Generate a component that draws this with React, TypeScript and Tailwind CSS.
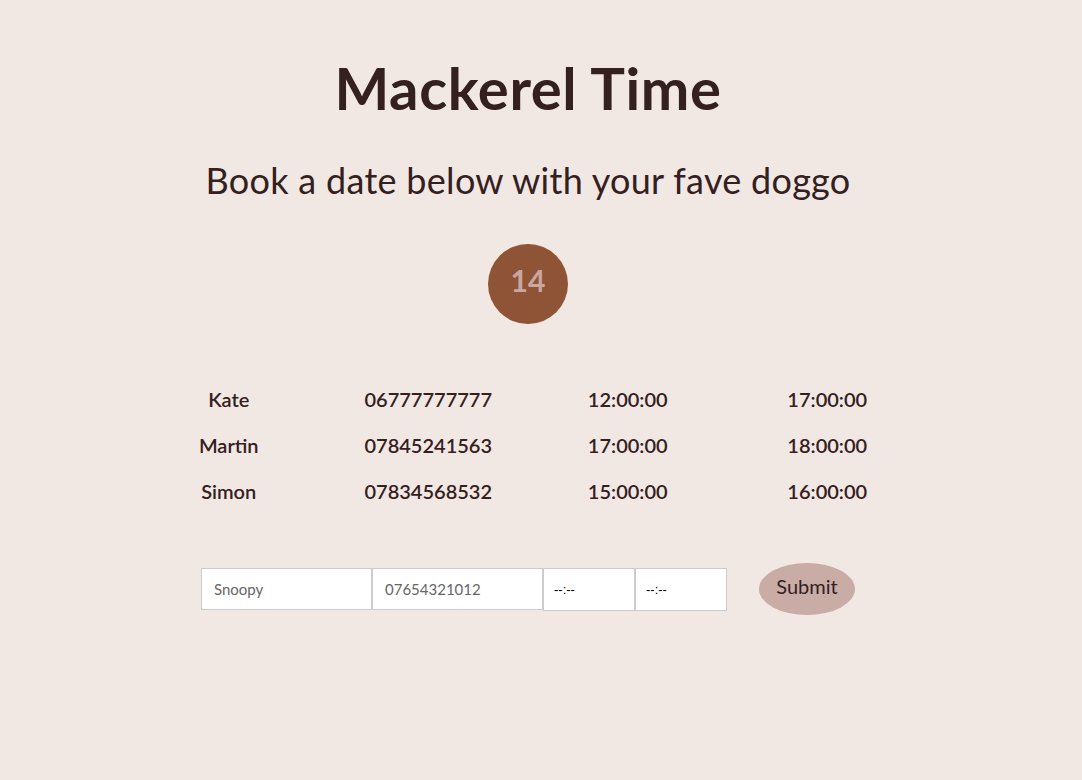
import React from "react";

const rows = [
  ["Kate", "06777777777", "12:00:00", "17:00:00"],
  ["Martin", "07845241563", "17:00:00", "18:00:00"],
  ["Simon", "07834568532", "15:00:00", "16:00:00"],
];

export default function App() {
  return (
    <div
      className="min-h-[780px] w-full bg-[#f2e8e3] text-[#33201f] flex flex-col items-center pr-[26px]"
      style={{ fontFamily: "Lato, 'Noto Sans', sans-serif" }}
    >
      <h1 className="mt-[52px] text-[58px] leading-[72px] font-bold tracking-[0.6px]">Mackerel Time</h1>
      <h2 className="mt-[34px] text-[36px] leading-[44px] font-normal tracking-[0.3px]">
        Book a date below with your fave doggo
      </h2>
      <div className="mt-[42px] w-[80px] h-[80px] rounded-full bg-[#8f5436] flex items-center justify-center pb-[8px]">
        <span className="text-[30px] font-bold text-[#c9a6a0] leading-none">14</span>
      </div>
      <div className="mt-[52px] w-[798px] grid grid-cols-4">
        {rows.map((r) =>
          r.map((c, i) => (
            <div key={r[0] + i} className="h-[46px] flex items-center justify-center text-[20px] font-semibold">
              {c}
            </div>
          ))
        )}
      </div>
      <form className="mt-[49px] flex items-center" onSubmit={(e) => e.preventDefault()}>
        <input
          className="w-[171px] h-[42px] bg-white border border-[#cccccc] px-[12px] text-[15px] text-[#333] placeholder:text-[#666666] outline-none"
          placeholder="Snoopy"
        />
        <input
          className="w-[171px] h-[42px] bg-white border border-[#cccccc] px-[12px] text-[15px] text-[#333] placeholder:text-[#666666] outline-none"
          placeholder="07654321012"
        />
        <input
          className="w-[92px] h-[43px] bg-white border border-[#cccccc] px-[10px] text-[13px] text-black placeholder:text-black outline-none"
          style={{ fontFamily: "'Liberation Sans', sans-serif" }}
          placeholder="--:--"
        />
        <input
          className="w-[92px] h-[43px] bg-white border border-[#cccccc] px-[10px] text-[13px] text-black placeholder:text-black outline-none"
          style={{ fontFamily: "'Liberation Sans', sans-serif" }}
          placeholder="--:--"
        />
        <button
          type="submit"
          className="ml-[32px] w-[96px] h-[52px] rounded-[50%] bg-[#c9aca6] text-[#33201f] text-[20px] pb-[6px]"
        >
          Submit
        </button>
      </form>
    </div>
  );
}
